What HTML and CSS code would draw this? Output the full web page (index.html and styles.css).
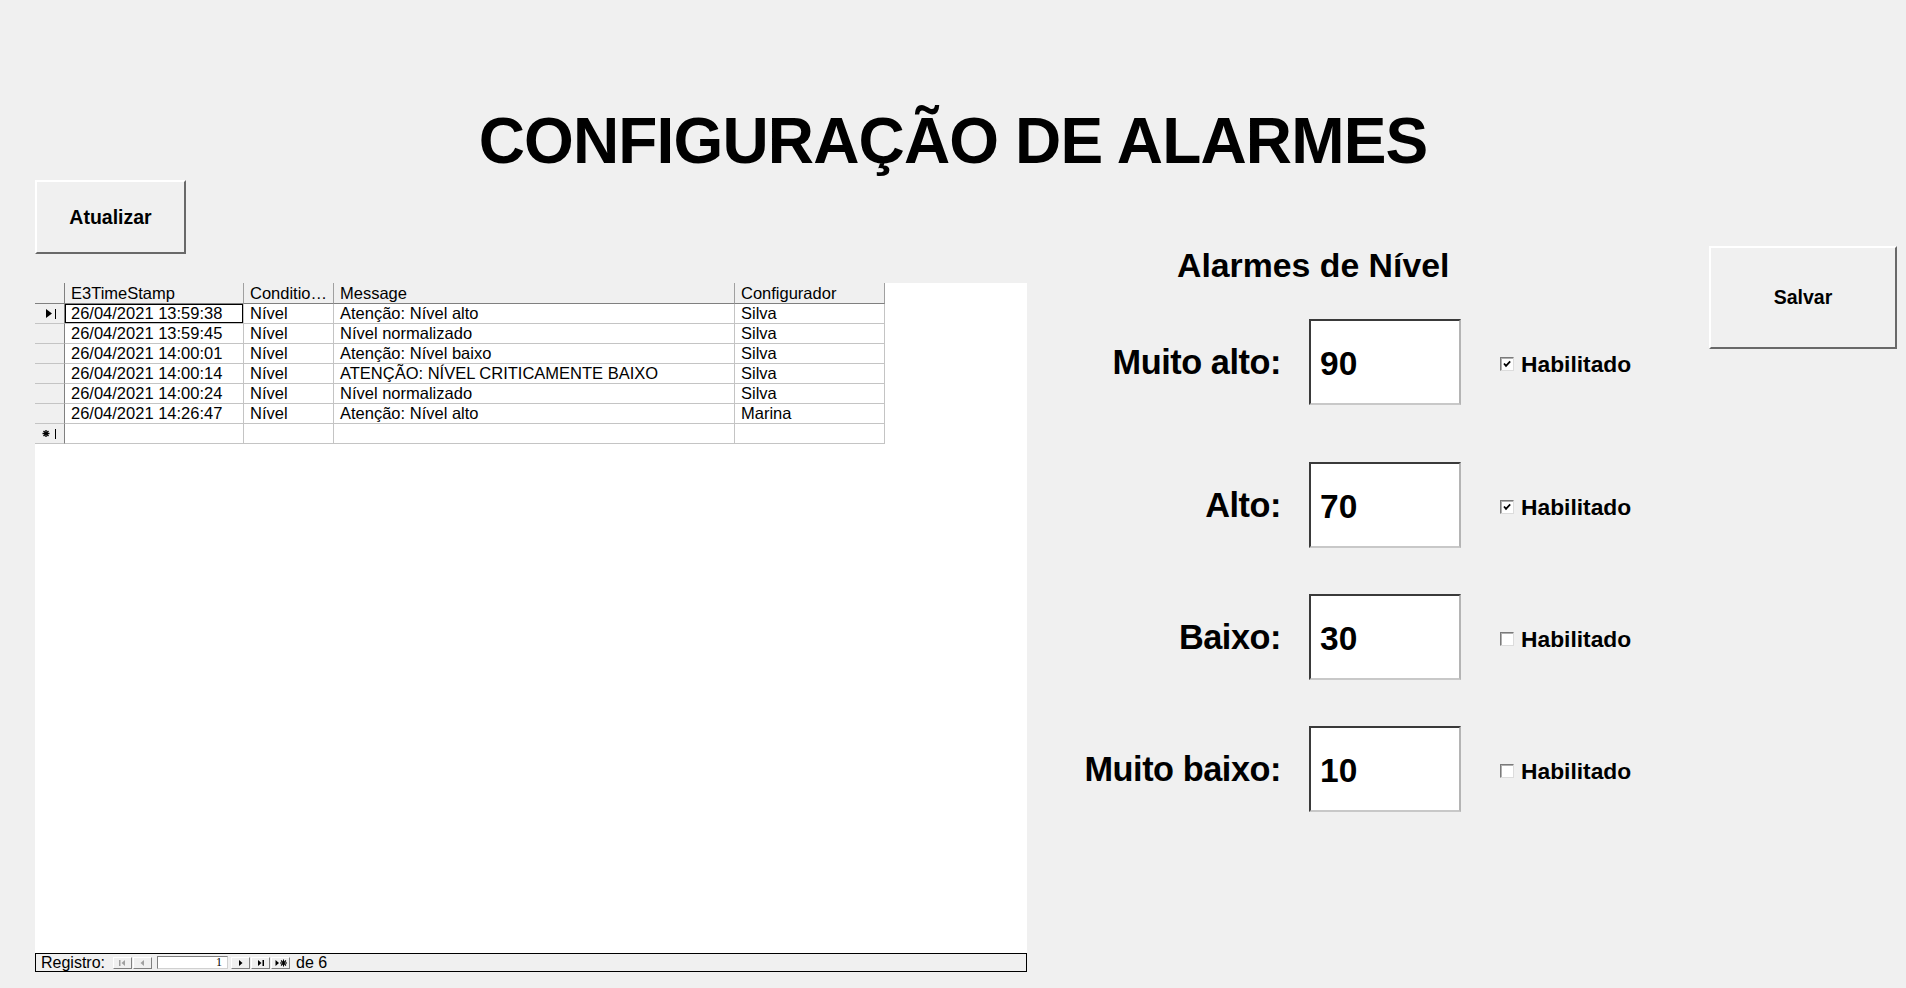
FILE: index.html
```html
<!DOCTYPE html>
<html lang="pt-BR">
<head>
<meta charset="utf-8">
<title>Configuração de Alarmes</title>
<link rel="stylesheet" href="styles.css">
</head>
<body>
<h1 class="title">CONFIGURAÇÃO DE ALARMES</h1>
<div class="content">
  <section class="left">
    <button class="btn btn-atualizar">Atualizar</button>
    <div class="grid-wrap">
      <div class="grid">
        <table class="records">
          <colgroup>
            <col class="c-sel"><col class="c-ts"><col class="c-cond"><col class="c-msg"><col class="c-cfg">
          </colgroup>
          <thead>
            <tr><th class="sel"></th><th>E3TimeStamp</th><th>Conditio…</th><th>Message</th><th>Configurador</th></tr>
          </thead>
          <tbody>
            <tr><td class="sel"><svg width="29" height="19" viewBox="0 0 29 19"><polygon points="11,5 17,9.5 11,14" fill="#000"/><rect x="20" y="5" width="1" height="10" fill="#000"/></svg></td><td class="focus">26/04/2021 13:59:38</td><td>Nível</td><td>Atenção: Nível alto</td><td>Silva</td></tr>
            <tr><td class="sel"></td><td>26/04/2021 13:59:45</td><td>Nível</td><td>Nível normalizado</td><td>Silva</td></tr>
            <tr><td class="sel"></td><td>26/04/2021 14:00:01</td><td>Nível</td><td>Atenção: Nível baixo</td><td>Silva</td></tr>
            <tr><td class="sel"></td><td>26/04/2021 14:00:14</td><td>Nível</td><td>ATENÇÃO: NÍVEL CRITICAMENTE BAIXO</td><td>Silva</td></tr>
            <tr><td class="sel"></td><td>26/04/2021 14:00:24</td><td>Nível</td><td>Nível normalizado</td><td>Silva</td></tr>
            <tr><td class="sel"></td><td>26/04/2021 14:26:47</td><td>Nível</td><td>Atenção: Nível alto</td><td>Marina</td></tr>
            <tr><td class="sel"><svg width="29" height="19" viewBox="0 0 29 19"><g stroke="#000" stroke-width="1.4"><line x1="11" y1="6" x2="11" y2="13"/><line x1="7.5" y1="9.5" x2="14.5" y2="9.5"/><line x1="8.5" y1="7" x2="13.5" y2="12"/><line x1="13.5" y1="7" x2="8.5" y2="12"/></g><rect x="20" y="5" width="1" height="10" fill="#000"/></svg></td><td></td><td></td><td></td><td></td></tr>
          </tbody>
        </table>
      </div>
      <div class="navbar">
        <span class="nav-label">Registro:</span>
        <span class="nav-group first-group">
          <span class="nb"><svg width="17" height="10" viewBox="0 0 17 10"><rect x="5" y="2" width="1.5" height="6" fill="#a0a0a0"/><polygon points="11,2 7.5,5 11,8" fill="#a0a0a0"/></svg></span>
          <span class="nb"><svg width="17" height="10" viewBox="0 0 17 10"><polygon points="10,2 6.5,5 10,8" fill="#a0a0a0"/></svg></span>
        </span>
        <span class="nav-input">1</span>
        <span class="nav-group next-group">
          <span class="nb"><svg width="17" height="10" viewBox="0 0 17 10"><polygon points="7,2 10.5,5 7,8" fill="#000"/></svg></span>
          <span class="nb"><svg width="17" height="10" viewBox="0 0 17 10"><polygon points="6,2 9.5,5 6,8" fill="#000"/><rect x="10.5" y="2" width="1.5" height="6" fill="#000"/></svg></span>
          <span class="nb"><svg width="17" height="10" viewBox="0 0 17 10"><polygon points="3.5,2 7,5 3.5,8" fill="#000"/><g stroke="#000" stroke-width="1.1"><line x1="11.5" y1="1.5" x2="11.5" y2="8.5"/><line x1="8" y1="5" x2="15" y2="5"/><line x1="9" y1="2.5" x2="14" y2="7.5"/><line x1="14" y1="2.5" x2="9" y2="7.5"/></g></svg></span>
        </span>
        <span class="nav-total">de 6</span>
      </div>
    </div>
  </section>

  <section class="alarms">
    <h2 class="alarms-title">Alarmes de Nível</h2>
    <div class="alarm-row row-1">
      <span class="alarm-label">Muito alto:</span>
      <div class="value-box">90</div>
      <label class="enable"><span class="cb"><svg width="12" height="12" viewBox="0 0 12 12"><path d="M3 5.5 L5 7.8 L9.2 3.4" fill="none" stroke="#000" stroke-width="1.8"/></svg></span>Habilitado</label>
    </div>
    <div class="alarm-row row-2">
      <span class="alarm-label">Alto:</span>
      <div class="value-box">70</div>
      <label class="enable"><span class="cb"><svg width="12" height="12" viewBox="0 0 12 12"><path d="M3 5.5 L5 7.8 L9.2 3.4" fill="none" stroke="#000" stroke-width="1.8"/></svg></span>Habilitado</label>
    </div>
    <div class="alarm-row row-3">
      <span class="alarm-label">Baixo:</span>
      <div class="value-box">30</div>
      <label class="enable"><span class="cb"></span>Habilitado</label>
    </div>
    <div class="alarm-row row-4">
      <span class="alarm-label">Muito baixo:</span>
      <div class="value-box">10</div>
      <label class="enable"><span class="cb"></span>Habilitado</label>
    </div>
  </section>

  <button class="btn btn-salvar">Salvar</button>
</div>
</body>
</html>
```

FILE: styles.css
```css
html, body {
  margin: 0;
  padding: 0;
}

body {
  background: #f0f0f0;
  font-family: "Liberation Sans", Arial, sans-serif;
  color: #000;
  width: 1906px;
  height: 988px;
  overflow: hidden;
}

.title {
  margin: 0;
  padding-top: 109px;
  font-size: 64px;
  line-height: 64px;
  font-weight: bold;
  text-align: center;
  letter-spacing: -0.85px;
}

.content {
  display: flex;
  align-items: flex-start;
}

/* Buttons */
.btn {
  box-sizing: border-box;
  background: #f0f0f0;
  border-style: solid;
  border-width: 2px;
  border-color: #ffffff #696969 #696969 #ffffff;
  font-family: "Liberation Sans", Arial, sans-serif;
  font-weight: bold;
  font-size: 19.5px;
  color: #000;
  padding: 0;
  cursor: pointer;
}

.btn-atualizar {
  width: 151px;
  height: 74px;
  margin-top: 7px;
}

.btn-salvar {
  width: 188px;
  height: 103px;
  margin-top: 73px;
  margin-left: auto;
  margin-right: 9px;
}

/* Left panel */
.left {
  margin-left: 35px;
  width: 992px;
  display: flex;
  flex-direction: column;
  align-items: flex-start;
}

.grid-wrap {
  margin-top: 29px;
  width: 992px;
}

.grid {
  background: #fff;
  height: 670px;
}

.records {
  border-collapse: separate;
  border-spacing: 0;
  table-layout: fixed;
  width: 850px;
  font-family: "Liberation Sans", Arial, sans-serif;
  font-size: 16.5px;
}

.c-sel { width: 30px; }
.c-ts { width: 179px; }
.c-cond { width: 90px; }
.c-msg { width: 401px; }
.c-cfg { width: 150px; }

.records tr {
  height: 20px;
}

.records th,
.records td {
  padding: 0 0 0 6px;
  line-height: 19px;
  border-right: 1px solid #c4c4c4;
  border-bottom: 1px solid #c4c4c4;
  white-space: nowrap;
  overflow: hidden;
  text-align: left;
  font-weight: normal;
  vertical-align: top;
}

.records th {
  background: #f0f0f0;
  border-right-color: #a0a0a0;
  border-bottom-color: #808080;
  line-height: 20px;
}

.records .sel {
  padding: 0;
  background: #f0f0f0;
  border-right-color: #808080;
}

.records .sel svg {
  display: block;
}

.records .focus {
  box-shadow: inset 0 0 0 1px #000;
}

/* Navigation bar */
.navbar {
  box-sizing: border-box;
  height: 19px;
  border: 1px solid #000;
  background: #f0f0f0;
  display: flex;
  align-items: center;
  padding-left: 5px;
  font-size: 16px;
  line-height: 17px;
}

.nav-group {
  display: flex;
  gap: 1px;
}

.first-group {
  margin-left: 8px;
}

.next-group {
  margin-left: 3px;
}

.nb {
  box-sizing: border-box;
  width: 19px;
  height: 12px;
  border: 1px solid;
  border-color: #ffffff #808080 #808080 #ffffff;
  background: #f0f0f0;
  display: flex;
  align-items: center;
  justify-content: center;
}

.nb svg {
  display: block;
}

.nav-input {
  box-sizing: border-box;
  margin-left: 5px;
  width: 71px;
  height: 13px;
  background: #fff;
  border: 1px solid;
  border-color: #808080 #d0d0d0 #d0d0d0 #808080;
  font-family: "Liberation Serif", "Times New Roman", serif;
  font-size: 12px;
  line-height: 11px;
  text-align: right;
  padding-right: 5px;
}

.nav-total {
  margin-left: 6px;
}

/* Alarms panel */
.alarms {
  margin-left: 56px;
  width: 560px;
}

.alarms-title {
  margin: 72px 0 0 0;
  padding-left: 94px;
  font-size: 33.8px;
  line-height: 40px;
  font-weight: bold;
}

.alarm-row {
  display: flex;
  align-items: center;
}

.row-1 { margin-top: 34px; }
.row-2 { margin-top: 57px; }
.row-3 { margin-top: 46px; }
.row-4 { margin-top: 46px; }

.alarm-label {
  flex: 0 0 198px;
  display: flex;
  justify-content: flex-end;
  white-space: nowrap;
  font-size: 34.3px;
  line-height: 40px;
  font-weight: bold;
  letter-spacing: -0.45px;
}

.value-box {
  box-sizing: border-box;
  margin-left: 28px;
  width: 152px;
  height: 86px;
  background: #fff;
  border-style: solid;
  border-width: 2px;
  border-color: #3a3a3a #b4b4b4 #c8c8c8 #3a3a3a;
  padding-left: 9px;
  display: flex;
  align-items: center;
  font-size: 33.5px;
  font-weight: bold;
  padding-top: 3px;
}

.enable {
  margin-left: 39px;
  display: flex;
  align-items: center;
  font-size: 22.8px;
  font-weight: bold;
  padding-top: 4px;
}

.cb {
  box-sizing: border-box;
  width: 14px;
  height: 14px;
  margin-right: 7px;
  background: #fff;
  border: 1px solid;
  border-color: #7a7a7a #dcdcdc #dcdcdc #7a7a7a;
  box-shadow: inset 1px 1px 0 #b0b0b0;
  display: flex;
  align-items: center;
  justify-content: center;
}

.cb svg {
  display: block;
}
```
